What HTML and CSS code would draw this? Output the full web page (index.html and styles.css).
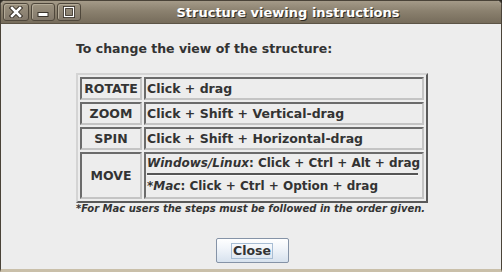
FILE: index.html
```html
<!DOCTYPE html>
<html lang="en">
<head>
    <meta charset="UTF-8">
    <title>Structure viewing instructions</title>
    <link rel="stylesheet" href="styles.css">
</head>
<body>
    <div class="window">
        <div class="titlebar">
            <div class="wm-btn">
                <svg width="14" height="12" viewBox="0 0 14 12">
                    <path d="M3 2 L11 10 M11 2 L3 10" stroke="#3b342b" stroke-width="4.5" stroke-linecap="square"/>
                    <path d="M3 2 L11 10 M11 2 L3 10" stroke="#fff" stroke-width="2.5" stroke-linecap="square"/>
                </svg>
            </div>
            <div class="wm-btn">
                <svg width="14" height="12" viewBox="0 0 14 12">
                    <rect x="2" y="6.5" width="10" height="4" fill="#fff" stroke="#3b342b" stroke-width="1"/>
                </svg>
            </div>
            <div class="wm-btn">
                <svg width="14" height="12" viewBox="0 0 14 12">
                    <rect x="2.5" y="1.5" width="9" height="9" fill="none" stroke="#3b342b" stroke-width="3"/>
                    <rect x="2.5" y="1.5" width="9" height="9" fill="none" stroke="#fff" stroke-width="1.2"/>
                </svg>
            </div>
            <div class="title">Structure viewing instructions</div>
        </div>

        <div class="content">
            <p class="intro">To change the view of the structure:</p>

            <table class="controls">
                <tr>
                    <td class="action">ROTATE</td>
                    <td>Click + drag</td>
                </tr>
                <tr>
                    <td class="action">ZOOM</td>
                    <td>Click + Shift + Vertical-drag</td>
                </tr>
                <tr>
                    <td class="action">SPIN</td>
                    <td>Click + Shift + Horizontal-drag</td>
                </tr>
                <tr>
                    <td class="action move">MOVE</td>
                    <td class="split">
                        <div class="line"><em>Windows/Linux</em>: Click + Ctrl + Alt + drag</div>
                        <div class="line mac"><em>*Mac</em>: Click + Ctrl + Option + drag</div>
                    </td>
                </tr>
            </table>

            <p class="note">*For Mac users the steps must be followed in the order given.</p>

            <div class="actions">
                <button class="btn-close"><span>Close</span></button>
            </div>
        </div>
    </div>
</body>
</html>
```

FILE: styles.css
```css
/* Basic Reset */
* {
    margin: 0;
    padding: 0;
    box-sizing: border-box;
}

body {
    width: 502px;
    height: 272px;
    background-color: #2e2a24;
    font-family: "DejaVu Sans", sans-serif;
    color: #333;
    overflow: hidden;
}

.window {
    width: 502px;
    height: 272px;
    display: flex;
    flex-direction: column;
    background-color: #ededed;
    border-radius: 5px 5px 0 0;
    border: 1px solid #4a4338;
    border-bottom: 3px solid #c9bfa9;
    overflow: hidden;
}

.titlebar {
    height: 23px;
    flex-shrink: 0;
    display: flex;
    align-items: center;
    gap: 2px;
    padding-left: 2px;
    background: linear-gradient(#a49a88, #8b816f 45%, #766c5b);
    border-bottom: 1px solid #5c5446;
}

.wm-btn {
    width: 24px;
    height: 18px;
    display: flex;
    justify-content: center;
    align-items: center;
    border: 1px solid #4f473b;
    border-radius: 3px;
    background: linear-gradient(#9c927f, #82786a);
    box-shadow: inset 1px 1px 0 #b3aa98;
}

.wm-btn:first-child {
    width: 26px;
}

.title {
    flex: 1;
    text-align: center;
    font-size: 13px;
    font-weight: bold;
    color: #fff;
    text-shadow: 1px 1px 0 #2f2a22;
    padding: 1px 8px 0 0;
}

.content {
    flex: 1;
    padding: 17px 0 0 75px;
}

.intro {
    font-size: 12.5px;
    font-weight: bold;
    margin-bottom: 17px;
}

.controls {
    width: 352px;
    table-layout: fixed;
    border-collapse: separate;
    border-spacing: 2px;
    border: 2px solid;
    border-color: #d4d4d4 #5a5a5a #5a5a5a #d4d4d4;
    font-size: 12.5px;
    font-weight: bold;
    line-height: 15px;
}

.controls td {
    height: 23px;
    padding: 0 1px;
    border: 2px solid;
    border-color: #6b6b6b #c4c4c4 #c4c4c4 #6b6b6b;
    white-space: nowrap;
    overflow: hidden;
}

.controls td.action {
    width: 62px;
    padding: 0;
    text-align: center;
}

.controls td.split {
    height: 47px;
    padding: 0 4px 0 1px;
    font-size: 12px;
}

.line {
    height: 19px;
    line-height: 19px;
}

.line em {
    font-style: italic;
}

.line.mac {
    height: 24px;
    line-height: 22px;
    border-top: 2px solid #555;
    box-shadow: inset 0 1px 0 #fafafa;
}

.note {
    font-size: 10px;
    line-height: 12px;
    font-weight: bold;
    font-style: italic;
    color: #333;
}

.actions {
    width: 352px;
    display: flex;
    justify-content: center;
    padding-top: 23px;
}

.btn-close {
    width: 73px;
    height: 25px;
    border: 1px solid #8593a7;
    border-radius: 2px;
    background: linear-gradient(#ffffff, #f1f5fa 40%, #d7e2ee);
    font-family: "DejaVu Sans", sans-serif;
    font-size: 12.5px;
    font-weight: bold;
    color: #333;
    display: flex;
    justify-content: center;
    align-items: center;
}

.btn-close span {
    padding: 0 1px;
    border: 1px solid #a7bdd4;
    line-height: 14px;
}
```
